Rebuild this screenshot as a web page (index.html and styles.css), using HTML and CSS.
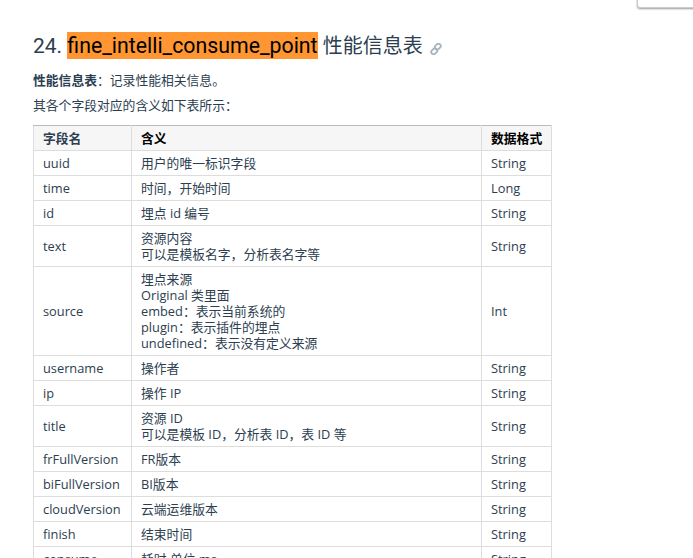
FILE: index.html
```html
<!DOCTYPE html>
<html lang="zh">
<head>
<meta charset="utf-8">
<title>fine_intelli_consume_point</title>
<link rel="stylesheet" href="styles.css">
</head>
<body>
<div class="corner-popup"></div>
<main class="content">
  <h2 class="title"><span class="latin">24. </span><mark class="hit">fine_intelli_consume_point</mark> 性能信息表 <svg class="anchor" viewBox="0 0 12 12" width="12" height="12" aria-hidden="true"><g fill="none" stroke="#aab2c0" stroke-width="1.8"><rect x="4.6" y="1.4" width="6.4" height="4.6" rx="2.3" transform="rotate(-45 7.8 3.7)"/><rect x="1" y="6" width="6.4" height="4.6" rx="2.3" transform="rotate(-45 4.2 8.3)"/></g></svg></h2>
  <p class="para"><strong>性能信息表</strong>：记录性能相关信息。</p>
  <p class="para">其各个字段对应的含义如下表所示：</p>
  <table class="fields">
    <colgroup><col class="c1"><col class="c2"><col class="c3"></colgroup>
    <thead>
      <tr><th class="th-soft">字段名</th><th>含义</th><th>数据格式</th></tr>
    </thead>
    <tbody>
      <tr><td>uuid</td><td>用户的唯一标识字段</td><td>String</td></tr>
      <tr><td>time</td><td>时间，开始时间</td><td>Long</td></tr>
      <tr><td>id</td><td>埋点 id 编号</td><td>String</td></tr>
      <tr><td>text</td><td>资源内容<br>可以是模板名字，分析表名字等</td><td>String</td></tr>
      <tr><td>source</td><td>埋点来源<br>Original 类里面<br>embed：表示当前系统的<br>plugin：表示插件的埋点<br>undefined：表示没有定义来源</td><td>Int</td></tr>
      <tr><td>username</td><td>操作者</td><td>String</td></tr>
      <tr><td>ip</td><td>操作 IP</td><td>String</td></tr>
      <tr><td>title</td><td>资源 ID<br>可以是模板 ID，分析表 ID，表 ID 等</td><td>String</td></tr>
      <tr><td>frFullVersion</td><td>FR版本</td><td>String</td></tr>
      <tr><td>biFullVersion</td><td>BI版本</td><td>String</td></tr>
      <tr><td>cloudVersion</td><td>云端运维版本</td><td>String</td></tr>
      <tr><td>finish</td><td>结束时间</td><td>String</td></tr>
      <tr><td>consume</td><td>耗时 单位 ms</td><td>String</td></tr>
    </tbody>
  </table>
</main>
</body>
</html>
```
FILE: styles.css
```css
html, body {
  margin: 0;
  height: 558px;
  overflow: hidden;
  background: #fff;
}
body {
  position: relative;
  font-family: "Open Sans", "Noto Sans CJK SC", sans-serif;
  color: #2c3e50;
  font-size: 12.8px;
}
.corner-popup {
  position: absolute;
  top: -10px;
  left: 637px;
  width: 70px;
  height: 16px;
  background: #fff;
  border: 1px solid #ccc;
  border-radius: 3px;
  box-shadow: 0 1px 2px rgba(0,0,0,.4);
}
.content {
  padding: 33px 0 0 33px;
}
.title {
  margin: 0;
  font-size: 20px;
  font-weight: 400;
  line-height: 26px;
  white-space: nowrap;
}
.latin {
  font-family: Roboto, sans-serif;
  font-size: 21px;
}
.hit {
  font-family: Roboto, sans-serif;
  font-size: 21.3px;
  padding: 1px 0;
  background: #ff9632;
  color: #000;
}
.anchor {
  vertical-align: -2px;
  margin-left: 2px;
}
.para {
  margin: 0;
  line-height: 17px;
}
.title + .para { margin-top: 13px; }
.para + .para { margin-top: 8px; }
.fields {
  margin-top: 11px;
  border-collapse: collapse;
  table-layout: fixed;
  width: 518px;
  line-height: 16px;
}
.c1 { width: 98px; }
.c2 { width: 350px; }
.c3 { width: 70px; }
.fields th, .fields td {
  border: 1px solid #ddd;
  padding: 4px 9px;
  text-align: left;
  white-space: nowrap;
}
.fields th {
  background: #f6f6f6;
  color: #000;
  font-weight: 700;
  border-color: #ddd;
  border-top-color: #bbb;
}
.fields th.th-soft { color: #2c3e50; }
```
